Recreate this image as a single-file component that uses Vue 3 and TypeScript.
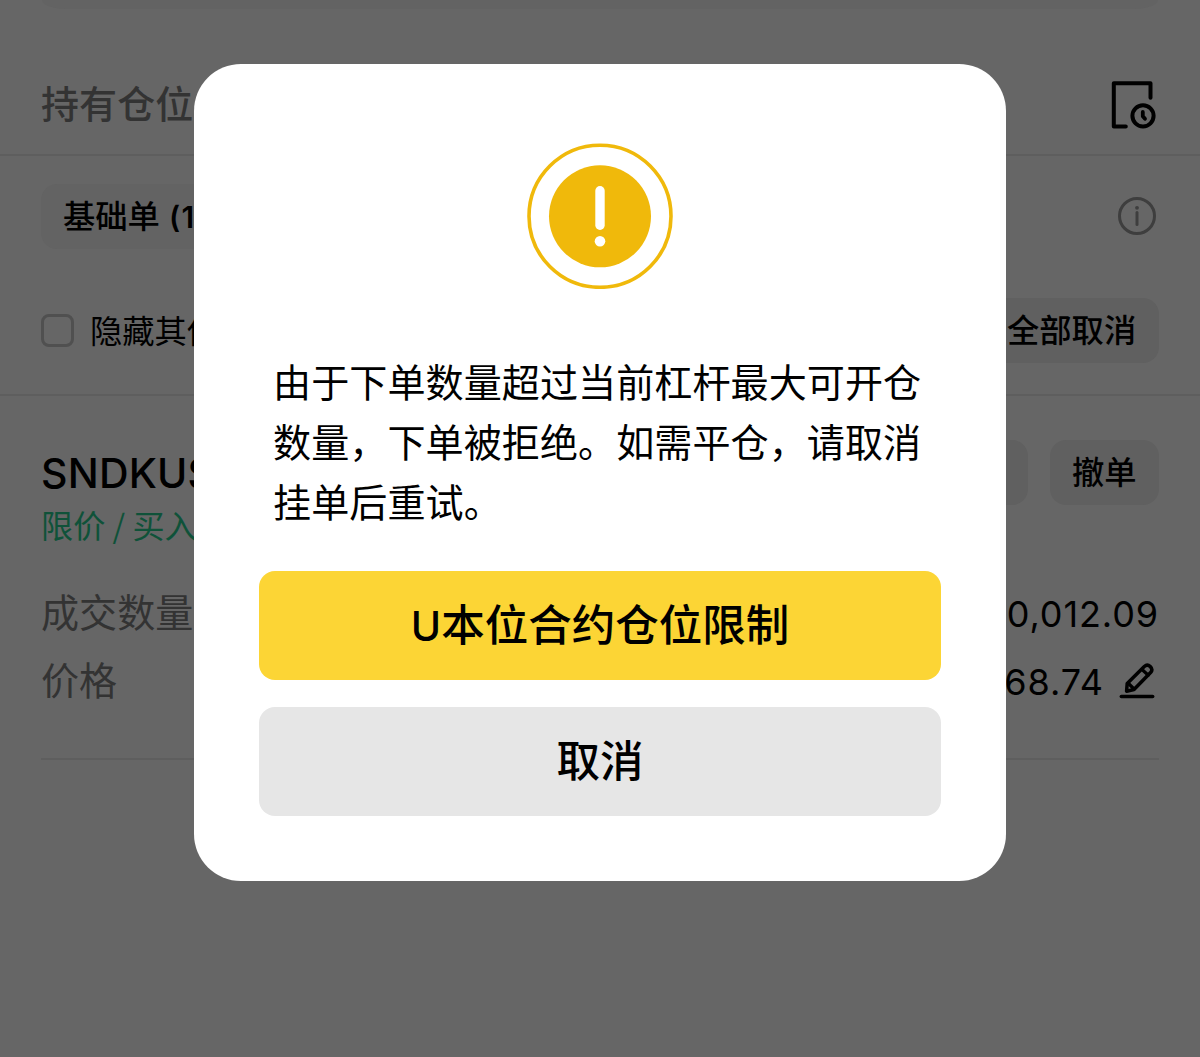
<script setup lang="ts">
interface OrderRow {
  label: string
  value: string
  editable: boolean
}

const orderRows: OrderRow[] = [
  { label: '成交数量', value: '0,012.09', editable: false },
  { label: '价格', value: '68.74', editable: true },
]

const message = '由于下单数量超过当前杠杆最大可开仓数量，下单被拒绝。如需平仓，请取消挂单后重试。'
</script>

<template>
  <div class="screen">
    <main class="page">
      <div class="panel-edge"></div>

      <header class="tabs">
        <span class="tab">持有仓位</span>
        <svg class="history" width="48" height="52" viewBox="0 0 48 52" fill="none" stroke="#000" stroke-width="4" stroke-linecap="round" stroke-linejoin="round">
          <path d="M40.500 19.700V5.200H3.800V48.500H15.800" />
          <circle cx="33" cy="37.800" r="10.600" />
          <path d="M32.800 34V38.200L35 40.800" stroke-width="3.800" />
        </svg>
      </header>

      <section class="filters">
        <div class="line">
          <span class="chip chip-left">基础单<b>(1)</b></span>
          <svg class="info" width="38" height="38" viewBox="0 0 38 38" fill="none" stroke="#3e3e3e">
            <circle cx="19" cy="19" r="17.500" stroke-width="3" />
            <path d="M19 15.500V27.500" stroke-width="3" stroke-linecap="round" />
            <circle cx="19" cy="10.800" r="1.900" fill="#3e3e3e" stroke="none" />
          </svg>
        </div>
        <div class="line">
          <label class="hide"><span class="box"></span>隐藏其他</label>
          <span class="chip chip-all">全部取消</span>
        </div>
      </section>

      <section class="order">
        <div class="order-head">
          <span class="symbol">SNDKUSDT</span>
          <span class="chip chip-edit"></span>
          <span class="chip chip-cancel">撤单</span>
        </div>
        <div class="side">限价 / 买入</div>
        <div v-for="row in orderRows" :key="row.label" class="row">
          <span class="label">{{ row.label }}</span>
          <span class="value">{{ row.value }}</span>
          <svg v-if="row.editable" class="pencil" width="38" height="38" viewBox="0 0 38 38" fill="none" stroke="#000" stroke-width="3.500" stroke-linecap="round" stroke-linejoin="round">
            <path d="M8.600 29.200L9.200 21.500L26.300 4.500Q29.300 1.800 32.300 4.600Q35.300 7.500 32.600 10.600L16 27.500Z" />
            <path d="M10.500 21.500L16 27M24 7.500L30.300 13.200" stroke-width="3.200" />
            <path d="M3.300 34.600H34.700" />
          </svg>
        </div>
      </section>
    </main>

    <div class="overlay">
      <div class="dialog" role="alertdialog">
        <svg class="warn" width="146" height="146" viewBox="0 0 146 146">
          <circle cx="73" cy="73.300" r="71" fill="none" stroke="#f0b90b" stroke-width="3.600" />
          <circle cx="73" cy="73.300" r="51" fill="#f0b90b" />
          <path d="M73 47.800V82.300" stroke="#fff" stroke-width="9.400" stroke-linecap="round" />
          <circle cx="73" cy="98.300" r="5.300" fill="#fff" />
        </svg>
        <p class="message">{{ message }}</p>
        <button class="btn primary" type="button"><span class="latin">U</span>本位合约仓位限制</button>
        <button class="btn" type="button">取消</button>
      </div>
    </div>
  </div>
</template>

<style>
body {
  margin: 0;
  background: #666;
}
</style>

<style scoped>
.screen {
  position: relative;
  width: 1200px;
  height: 1057px;
  overflow: hidden;
  background: #666;
  color: #000;
  font-family: Inter, "Noto Sans CJK SC", sans-serif;
}
.page {
  display: flex;
  flex-direction: column;
}
.panel-edge {
  height: 9px;
  margin: 0 42px;
  background: #636363;
  border-radius: 0 0 24px 24px / 0 0 9px 9px;
}
.tabs {
  display: flex;
  align-items: center;
  justify-content: space-between;
  height: 145px;
  padding: 0 42px 0 41px;
  border-bottom: 2px solid #5e5e5e;
}
.tab {
  font: 500 38px/56px "Noto Sans CJK SC", sans-serif;
  letter-spacing: 0.1px;
  color: #333;
  margin-top: 40px;
}
.history {
  margin-top: 45px;
}
.filters {
  display: flex;
  flex-direction: column;
  gap: 48px;
  height: 211px;
  padding: 27px 41px 0;
  border-bottom: 2px solid #5e5e5e;
}
.line {
  display: flex;
  align-items: center;
  justify-content: space-between;
  height: 66px;
}
.chip {
  box-sizing: border-box;
  height: 65px;
  border-radius: 16px;
  background: #606060;
  font: 500 32.3px/61px "Noto Sans CJK SC", sans-serif;
  white-space: nowrap;
}
.chip b {
  margin-left: 9px;
  font: 600 30px/61px Inter, sans-serif;
  letter-spacing: 1.5px;
}
.chip-left {
  width: 220px;
  padding-left: 22px;
  background: #636363;
}
.info {
  margin-right: 3px;
}
.hide {
  display: flex;
  align-items: center;
  margin-top: -3px;
  font: 400 32.3px/60px "Noto Sans CJK SC", sans-serif;
  height: 64px;
}
.box {
  box-sizing: border-box;
  width: 33px;
  height: 33px;
  margin: 3px 16px 0 0;
  border: 3px solid #505050;
  border-radius: 8px;
}
.chip-all {
  width: 174px;
  padding-left: 22px;
}
.order {
  margin: 0 41px;
  height: 362px;
  border-bottom: 2px solid #5e5e5e;
}
.order-head {
  display: flex;
  align-items: center;
  height: 66px;
  padding-top: 43px;
}
.symbol {
  flex: 1;
  font-size: 41px;
  font-weight: 500;
  line-height: 66px;
  letter-spacing: 0.2px;
  padding-top: 2px;
}
.chip-edit {
  width: 110px;
  margin-right: 22px;
}
.chip-cancel {
  width: 109px;
  padding-left: 22px;
}
.side {
  font: 400 32.2px/44px "Noto Sans CJK SC", sans-serif;
  color: #0f5239;
  margin: -3px 0 33px;
}
.row {
  display: flex;
  align-items: center;
  height: 68px;
}
.label {
  flex: 1;
  color: #333;
  font: 400 38.1px/64px "Noto Sans CJK SC", sans-serif;
  height: 68px;
}
.value {
  padding-top: 2px;
  font-size: 36px;
  letter-spacing: 0.9px;
}
.pencil {
  margin: -1px 3px 0 14px;
}
.overlay {
  position: absolute;
  inset: 0;
  display: flex;
  justify-content: center;
  align-items: flex-start;
  padding-top: 64px;
}
.dialog {
  box-sizing: border-box;
  display: flex;
  flex-direction: column;
  align-items: center;
  width: 812px;
  height: 817px;
  padding: 79px 65px 0;
  border-radius: 47px;
  background: #fff;
}
.message {
  width: 654px;
  margin: 62px 0 40px;
  font: 400 38.1px/60px "Noto Sans CJK SC", sans-serif;
  letter-spacing: 0.05px;
}
.btn {
  width: 682px;
  height: 109px;
  margin: 0 0 27px;
  padding: 0 0 5px;
  border: 0;
  border-radius: 16px;
  background: #e6e6e6;
  color: #000;
  font: 500 43.5px/64px "Noto Sans CJK SC", sans-serif;
}
.primary {
  background: #fcd535;
}
.latin {
  font: 500 41px/60px Inter, sans-serif;
}
</style>
